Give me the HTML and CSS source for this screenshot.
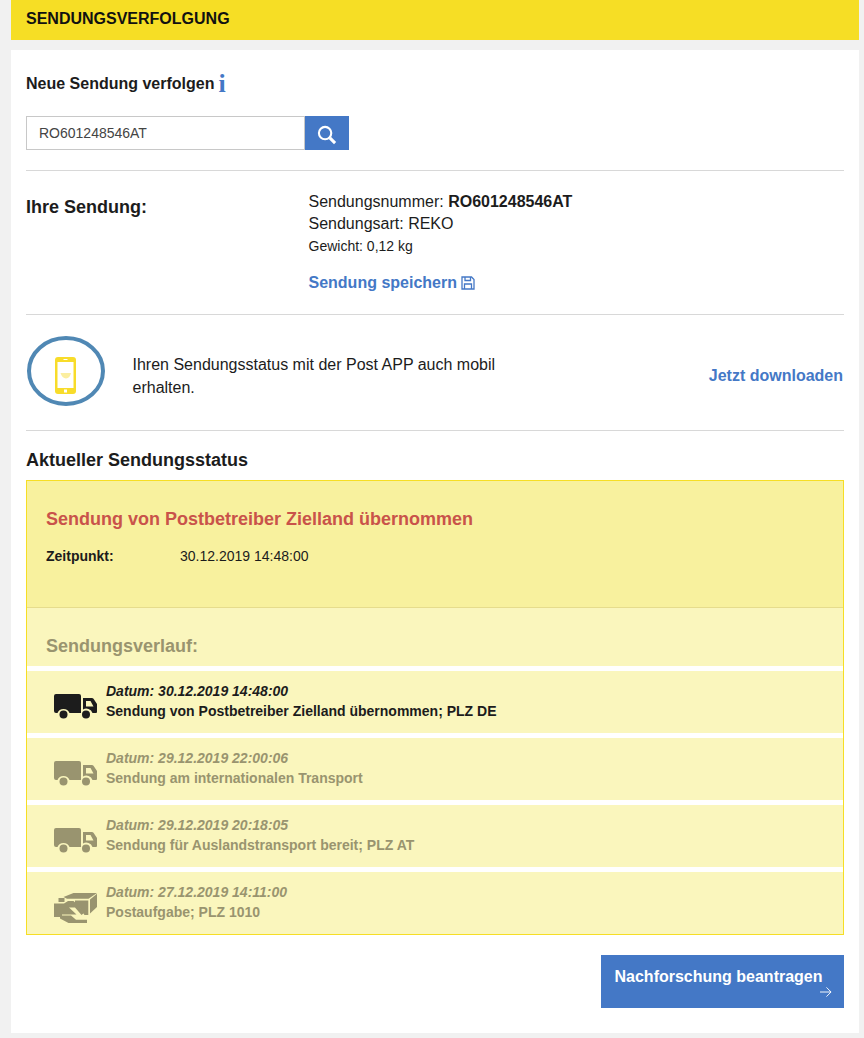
FILE: index.html
```html
<!DOCTYPE html>
<html lang="de">
<head>
<meta charset="utf-8">
<title>Sendungsverfolgung</title>
<link rel="stylesheet" href="styles.css">
</head>
<body>
<svg class="defs" width="0" height="0" aria-hidden="true">
  <symbol id="truck" viewBox="0 0 43 25">
    <path d="M2 0H25Q27 0 27 2V19H15.500A6.500 6.500 0 0 0 3.500 19H2Q0 19 0 17V2Q0 0 2 0Z"/>
    <path d="M29 4H38Q39.500 4 40 5.500L43 10V18Q43 19 42 19H38.500A6.500 6.500 0 0 0 29 15.500ZM32 7V12.500H39.500L36.500 7Z" fill-rule="evenodd"/>
    <circle cx="9.500" cy="20.500" r="4"/>
    <circle cx="32" cy="20.500" r="4"/>
  </symbol>
  <symbol id="hand" viewBox="0 0 43 30">
    <path d="M9.500 4 19.500 0H43L34.500 5.800H13Z"/>
    <path d="M21 7.500H34.300V22H30.500L26.500 16 21 10.500Z"/>
    <path d="M36 6.500 43 .8V14L36 20.500Z"/>
    <path d="M4.500 5H10.500V9H4.500Z"/>
    <path d="M0 10.500H10L14 8H19.500L25 13 30 20 27.500 22 21 14.500H15L22.500 21.500H8V24H0Z"/>
    <path d="M6 22.500H17L22 26.800H33V30H14.500L6 25.500Z"/>
  </symbol>
</svg>
<div class="page">
  <header class="banner"><h1>SENDUNGSVERFOLGUNG</h1></header>
  <main class="panel">
    <section class="search">
      <h2 class="search-title">Neue Sendung verfolgen <span class="info">i</span></h2>
      <div class="search-row">
        <div class="search-input">RO601248546AT</div>
        <button class="search-btn" aria-label="Suchen">
          <svg class="search-icon" width="20" height="20" viewBox="0 0 21 21" fill="none" stroke="#fff"><circle cx="8.500" cy="8.500" r="6.500" stroke-width="2.200"/><path d="M13.500 13.500 19 19" stroke-width="3.200"/></svg>
        </button>
      </div>
    </section>
    <section class="shipment">
      <h2 class="shipment-title">Ihre Sendung:</h2>
      <div class="shipment-info">
        <p>Sendungsnummer: <b>RO601248546AT</b></p>
        <p>Sendungsart: REKO</p>
        <p class="weight">Gewicht: 0,12 kg</p>
        <a class="save">Sendung speichern
          <svg width="14" height="14" viewBox="0 0 14 14" fill="none" stroke="#4478c6" stroke-width="1.300"><path d="M1 1H10.500L13 3.500V13H1Z"/><path d="M4 1V4.500H9.500V1M3.500 13V8H10.500V13"/></svg>
        </a>
      </div>
    </section>
    <section class="app">
      <svg class="app-icon" width="80" height="72" viewBox="0 0 80 72">
        <ellipse cx="40" cy="36" rx="37" ry="33" fill="#fff" stroke="#5088b4" stroke-width="4"/>
        <rect x="29" y="22" width="21" height="37" rx="3" fill="#f8dc2a"/>
        <rect x="31.500" y="27" width="16" height="26" fill="#fff"/>
        <rect x="37.500" y="24" width="4" height="1" fill="#fff"/>
        <rect x="38" y="54.500" width="3" height="3" fill="#fff"/>
        <path d="M34.500 38H45Q44 43 40 43.500Q36 43 34.500 38Z" fill="#fbeea0"/>
      </svg>
      <p class="app-text">Ihren Sendungsstatus mit der Post APP auch mobil erhalten.</p>
      <a class="download">Jetzt downloaden</a>
    </section>
    <section class="status">
      <h2 class="status-title">Aktueller Sendungsstatus</h2>
      <div class="status-box">
        <div class="current">
          <h3>Sendung von Postbetreiber Zielland übernommen</h3>
          <div class="time"><b>Zeitpunkt:</b><span>30.12.2019 14:48:00</span></div>
        </div>
        <div class="history">
          <h3>Sendungsverlauf:</h3>
          <div class="event active">
            <svg class="event-icon" width="43" height="25"><use href="#truck"/></svg>
            <div class="event-text"><i>Datum: 30.12.2019 14:48:00</i><b>Sendung von Postbetreiber Zielland übernommen; PLZ DE</b></div>
          </div>
          <div class="event">
            <svg class="event-icon" width="43" height="25"><use href="#truck"/></svg>
            <div class="event-text"><i>Datum: 29.12.2019 22:00:06</i><b>Sendung am internationalen Transport</b></div>
          </div>
          <div class="event">
            <svg class="event-icon" width="43" height="25"><use href="#truck"/></svg>
            <div class="event-text"><i>Datum: 29.12.2019 20:18:05</i><b>Sendung für Auslandstransport bereit; PLZ AT</b></div>
          </div>
          <div class="event">
            <svg class="event-icon" width="43" height="30"><use href="#hand"/></svg>
            <div class="event-text"><i>Datum: 27.12.2019 14:11:00</i><b>Postaufgabe; PLZ 1010</b></div>
          </div>
        </div>
      </div>
    </section>
    <div class="actions">
      <a class="cta">Nachforschung beantragen
        <svg class="cta-arrow" width="12" height="12" viewBox="0 0 13 12" fill="none" stroke="#fff" stroke-width="1"><path d="M0 6H12M7 1 12 6 7 11"/></svg>
      </a>
    </div>
  </main>
</div>
</body>
</html>
```
FILE: styles.css
```css
* { box-sizing: border-box; }
html, body { margin: 0; padding: 0; }
body {
  background: #f1f1f1;
  font-family: "Liberation Sans", Arial, sans-serif;
  color: #1c1c1c;
  height: 1038px;
  overflow: hidden;
}
.defs { position: absolute; }
h1, h2, h3, p { margin: 0; }
.page { width: 848px; margin-left: 11px; }
.banner {
  height: 40px;
  background: #f6de25;
  padding: 10px 15px 0;
}
.banner h1 { font-size: 16px; line-height: 17px; font-weight: 700; color: #111; }
.panel {
  margin-top: 10px;
  height: 983px;
  background: #fff;
  padding: 0 15px;
}
.search { height: 121px; padding-top: 24px; border-bottom: 1px solid #d8d8d8; }
.search-title { font-size: 16px; line-height: 20px; font-weight: 700; display: flex; gap: 4px; align-items: center; }
.info { font-family: "Liberation Serif", serif; color: #4478c6; font-size: 26px; line-height: 20px; font-weight: 700; }
.search-row { display: flex; margin-top: 22px; }
.search-input {
  width: 279px;
  height: 34px;
  border: 1px solid #c8c8c8;
  padding: 0 12px;
  font-size: 14px;
  line-height: 32px;
  color: #444;
}
.search-btn {
  width: 44px;
  height: 34px;
  border: 0;
  padding: 0;
  background: #4478c6;
  display: flex;
  align-items: center;
  justify-content: center;
}
.search-icon { margin-top: 4px; }
.shipment { height: 144px; display: flex; padding-top: 21px; border-bottom: 1px solid #d8d8d8; }
.shipment-title { width: 282.500px; font-size: 18px; line-height: 30px; font-weight: 700; }
.shipment-info { margin-top: -1px; font-size: 16px; line-height: 22px; }
.shipment-info p.weight { font-size: 14px; line-height: 22px; }
.save { display: flex; gap: 4.500px; align-items: center; margin-top: 16px; color: #4478c6; font-size: 16px; font-weight: 700; line-height: 20px; }
.app { height: 116px; display: flex; align-items: center; border-bottom: 1px solid #d8d8d8; }
.app-icon { flex: none; margin-bottom: 3px; }
.app-text { width: 385px; margin: 7px 0 0 26.500px; font-size: 16px; line-height: 23px; }
.download { margin: 6px 1px 0 auto; color: #4478c6; font-size: 16px; font-weight: 700; }
.status-title { font-size: 18px; line-height: 20px; font-weight: 700; margin-top: 19px; }
.status-box { margin-top: 10px; border: 1px solid #f6de25; background: #faf6bd; }
.current { height: 127px; background: #f8f19e; border-bottom: 1px solid #e6dc8c; padding: 28px 19px 0; }
.current h3 { font-size: 18px; line-height: 20px; font-weight: 700; color: #c9534a; }
.time { display: flex; margin-top: 17px; font-size: 14px; line-height: 20px; }
.time b { width: 134px; }
.history { padding-top: 28px; }
.history h3 { font-size: 18px; line-height: 20px; font-weight: 700; color: #99946f; padding-left: 19px; }
.event {
  height: 67px;
  border-top: 5px solid #fff;
  display: flex;
  align-items: center;
  padding-left: 27px;
  color: #99946f;
  font-size: 14px;
  line-height: 20px;
}
.history h3 + .event { margin-top: 10px; }
.event.active { color: #1c1c1c; }
.event-icon { flex: none; fill: currentColor; margin-top: 9px; }
.event-text { margin: -3px 0 0 9px; display: flex; flex-direction: column; }
.event-text i { font-weight: 700; }
.actions { display: flex; justify-content: flex-end; margin-top: 20px; }
.cta {
  position: relative;
  width: 243px;
  height: 53px;
  background: #4478c6;
  color: #fff;
  font-size: 16px;
  font-weight: 700;
  line-height: 20px;
  padding: 12px 13.500px 0;
}
.cta-arrow { position: absolute; right: 12px; bottom: 10px; }
```
